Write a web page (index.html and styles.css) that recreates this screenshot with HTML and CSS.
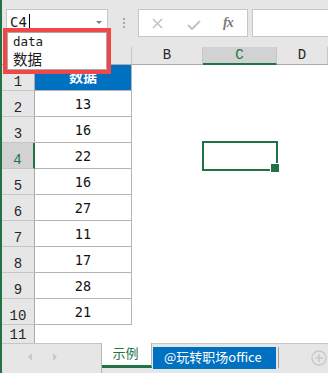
FILE: index.html
```html
<!DOCTYPE html>
<html>
<head>
<meta charset="utf-8">
<link rel="stylesheet" href="styles.css">
</head>
<body>
<div class="app">
  <div class="toolbar">
    <div class="namebox"><span class="ref">C4</span><span class="caret"></span><span class="dd"></span></div>
    <div class="grip"><i></i><i></i><i></i></div>
    <div class="fbtns">
      <svg class="ico-x" width="11" height="11" viewBox="0 0 11 11"><path d="M1 1 L10 10 M10 1 L1 10" stroke="#c3c3c3" stroke-width="1.6" fill="none"/></svg>
      <svg class="ico-ok" width="14" height="10" viewBox="0 0 14 10"><path d="M1 5 L5 9 L13 1" stroke="#c3c3c3" stroke-width="2" fill="none"/></svg>
      <span class="fx">fx</span>
    </div>
    <div class="fbar"></div>
  </div>

  <div class="sheet">
    <div class="corner"></div>
    <div class="colhead">A</div>
    <div class="colhead">B</div>
    <div class="colhead sel">C</div>
    <div class="colhead">D</div>

    <div class="rowhead">1</div><div class="cell a head">数据</div><div class="cell"></div><div class="cell"></div><div class="cell"></div>
    <div class="rowhead">2</div><div class="cell a">13</div><div class="cell"></div><div class="cell"></div><div class="cell"></div>
    <div class="rowhead">3</div><div class="cell a">16</div><div class="cell"></div><div class="cell"></div><div class="cell"></div>
    <div class="rowhead sel">4</div><div class="cell a">22</div><div class="cell"></div><div class="cell active"></div><div class="cell"></div>
    <div class="rowhead">5</div><div class="cell a">16</div><div class="cell"></div><div class="cell"></div><div class="cell"></div>
    <div class="rowhead">6</div><div class="cell a">27</div><div class="cell"></div><div class="cell"></div><div class="cell"></div>
    <div class="rowhead">7</div><div class="cell a">11</div><div class="cell"></div><div class="cell"></div><div class="cell"></div>
    <div class="rowhead">8</div><div class="cell a">17</div><div class="cell"></div><div class="cell"></div><div class="cell"></div>
    <div class="rowhead">9</div><div class="cell a">28</div><div class="cell"></div><div class="cell"></div><div class="cell"></div>
    <div class="rowhead">10</div><div class="cell a">21</div><div class="cell"></div><div class="cell"></div><div class="cell"></div>
    <div class="rowhead last">11</div><div class="cell"></div><div class="cell"></div><div class="cell"></div><div class="cell"></div>
  </div>

  <div class="tabs">
    <div class="nav"><span class="tri left"></span><span class="tri right"></span></div>
    <div class="tab active">示例</div>
    <div class="rest">
      <div class="tab blue">@玩转职场office</div>
      <div class="sep"></div>
      <svg class="plus" width="16" height="16" viewBox="0 0 16 16"><circle cx="8" cy="8" r="7" stroke="#c8c8c8" stroke-width="1.3" fill="none"/><path d="M8 4 V12 M4 8 H12" stroke="#c8c8c8" stroke-width="1.6"/></svg>
    </div>
  </div>

  <div class="popup">
    <div class="list">
      <div class="opt latin">data</div>
      <div class="opt cjk">数据</div>
    </div>
  </div>
</div>
</body>
</html>
```

FILE: styles.css
```css
* { box-sizing: border-box; }
html, body { margin: 0; padding: 0; }
body {
  width: 328px;
  height: 373px;
  overflow: hidden;
  background: #ffffff;
  font-family: "DejaVu Sans Mono", "Noto Sans CJK SC", monospace;
}
.app {
  position: relative;
  height: 373px;
  border-left: 2px solid #217346;
  display: flex;
  flex-direction: column;
  background: #e6e6e6;
}

/* toolbar */
.toolbar {
  height: 47px;
  flex: none;
  display: flex;
  align-items: flex-start;
  padding-top: 9px;
  background: #e6e6e6;
}
.namebox {
  margin-left: 4px;
  width: 102px;
  height: 28px;
  background: #fff;
  border: 1px solid #c6c6c6;
  display: flex;
  align-items: flex-start;
  padding: 3px 0 0 3px;
  position: relative;
}
.ref {
  font-family: "DejaVu Sans Mono", monospace;
  font-size: 14px;
  line-height: 18px;
  color: #1a1a1a;
}
.caret {
  width: 1px;
  height: 15px;
  background: #000;
  margin: 1px 0 0 2px;
}
.dd {
  position: absolute;
  right: 5px;
  top: 11px;
  width: 0; height: 0;
  border-left: 3px solid transparent;
  border-right: 3px solid transparent;
  border-top: 3px solid #7f7f7f;
}
.grip {
  margin-left: 15px;
  margin-top: 9px;
  width: 2px;
  display: flex;
  flex-direction: column;
  gap: 2px;
}
.grip i {
  display: block;
  width: 2px;
  height: 2px;
  background: #a8a8a8;
}
.fbtns {
  margin-left: 13px;
  width: 110px;
  height: 28px;
  background: #fff;
  border: 1px solid #c6c6c6;
  display: flex;
  align-items: center;
  padding-left: 13px;
}
.ico-x { margin-top: 1px; }
.ico-ok { margin-left: 24px; margin-top: 3px; }
.fx {
  margin-left: 22px;
  font-family: "Liberation Serif", serif;
  font-style: italic;
  font-weight: bold;
  font-size: 14px;
  color: #7a7a7a;
  letter-spacing: -1px;
}
.fbar {
  margin-left: 4px;
  margin-right: -3px;
  flex: 1;
  height: 28px;
  background: #fff;
  border: 1px solid #c6c6c6;
}

/* sheet */
.sheet {
  flex: none;
  display: grid;
  grid-template-columns: 33px 97px 71px 74px 1fr;
  grid-template-rows: 18px repeat(10, 26px) 18px;
  background: #fff;
  overflow: hidden;
}
.corner {
  background: #e6e6e6;
  border-right: 1px solid #ababab;
  border-bottom: 1px solid #ababab;
}
.colhead {
  background: #e6e6e6;
  border-right: 1px solid #c6c6c6;
  border-bottom: 1px solid #ababab;
  font-family: "Liberation Mono", monospace;
  font-size: 14px;
  line-height: 17px;
  text-align: center;
  color: #262626;
}
.colhead.sel {
  background: #d2d2d2;
  border-bottom: 2px solid #217346;
  color: #217346;
}
.rowhead {
  background: #e6e6e6;
  border-right: 1px solid #ababab;
  border-bottom: 1px solid #c6c6c6;
  display: flex;
  align-items: flex-end;
  justify-content: center;
  font-family: "Liberation Mono", monospace;
  font-size: 14px;
  line-height: 14px;
  padding-bottom: 1px;
  color: #262626;
}
.rowhead.sel {
  background: #d2d2d2;
  border-right: 2px solid #217346;
  color: #217346;
}
.rowhead.last { border-bottom: none; }
.cell { background: #fff; }
.cell.a {
  border-right: 1px solid #b4b4b4;
  border-bottom: 1px solid #b4b4b4;
  display: flex;
  align-items: flex-end;
  justify-content: center;
  font-size: 13.5px;
  line-height: 15px;
  padding-bottom: 4px;
  color: #111;
}
.cell.a.head {
  background: #0070c0;
  color: #fff;
  font-family: "Noto Sans CJK SC", sans-serif;
  font-weight: bold;
  font-size: 14px;
  align-items: center;
  padding-bottom: 2px;
}
.cell.active { position: relative; }
.cell.active::before {
  content: "";
  position: absolute;
  left: -1px; top: -2px; right: -1px; bottom: -2px;
  border: 2px solid #217346;
}
.cell.active::after {
  content: "";
  position: absolute;
  right: -3px; bottom: -4px;
  width: 8px; height: 8px;
  background: #217346;
  border: 1px solid #fff;
}

/* tabs */
.tabs {
  flex: 1;
  display: flex;
  background: #e6e6e6;
}
.nav {
  width: 100px;
  border-top: 1px solid #c6c6c6;
  border-right: 1px solid #b4b4b4;
  display: flex;
  align-items: center;
  padding: 0 0 4px 26px;
  gap: 21px;
}
.tri {
  width: 0; height: 0;
  border-top: 4px solid transparent;
  border-bottom: 4px solid transparent;
}
.tri.left { border-right: 4px solid #c8c8c8; }
.tri.right { border-left: 4px solid #c8c8c8; }
.tab {
  font-family: "Noto Sans CJK SC", sans-serif;
  white-space: nowrap;
}
.tab.active {
  width: 50px;
  height: 25px;
  background: #fff;
  border-right: 1px solid #b4b4b4;
  border-bottom: 3px solid #217346;
  color: #217346;
  font-size: 13px;
  line-height: 20px;
  text-align: center;
  padding-right: 2px;
}
.rest {
  flex: 1;
  border-top: 1px solid #c6c6c6;
  display: flex;
  align-items: flex-start;
  padding-top: 3px;
}
.tab.blue {
  margin-left: 1px;
  width: 123px;
  height: 22px;
  background: #0070c0;
  color: #fff;
  font-size: 13px;
  line-height: 20px;
  padding-left: 11px;
}
.sep {
  margin-left: 2px;
  width: 1px;
  height: 21px;
  background: #a0a0a0;
}
.plus { margin-left: 32px; margin-top: 3px; }

/* popup */
.popup {
  position: absolute;
  left: 1px;
  top: 28px;
  width: 108px;
  height: 46px;
  border: 4px solid #ef4848;
  background: #fff;
}
.list {
  height: 100%;
  border: 1px solid #a9a9a9;
  padding: 1px 0 0 5px;
}
.opt { color: #1a1a1a; }
.opt.latin {
  font-family: "DejaVu Sans Mono", monospace;
  font-size: 12.5px;
  line-height: 16px;
}
.opt.cjk {
  font-family: "Noto Sans CJK SC", sans-serif;
  font-size: 14.5px;
  line-height: 18px;
}
```
